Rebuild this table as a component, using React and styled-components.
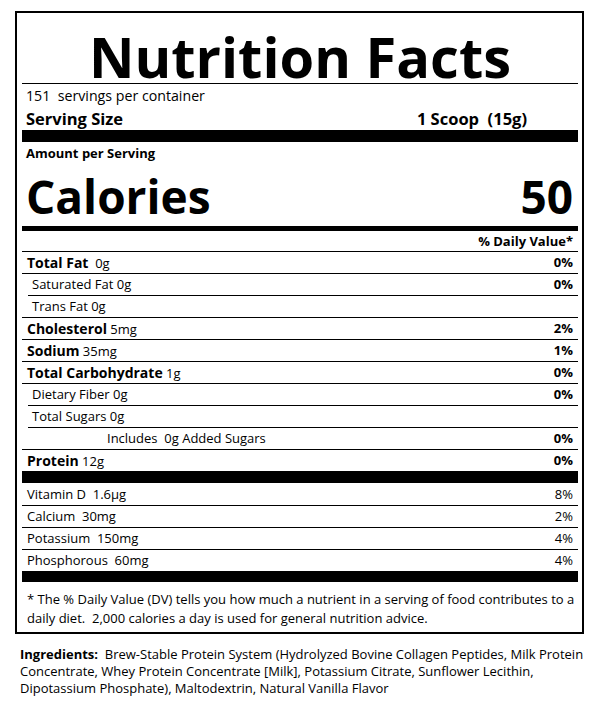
import React from "react";
import styled, { createGlobalStyle } from "styled-components";

const Global = createGlobalStyle`
  html, body { margin: 0; padding: 0; background: #fff; }
  body {
    font-family: "Open Sans", "Liberation Sans", Arial, sans-serif;
    color: #000;
  }
`;

const Page = styled.div`
  padding: 11px 0 0 15px;
  width: 569px;
`;

const Label = styled.section`
  box-sizing: border-box;
  width: 569px;
  border: 2px solid #000;
  padding: 0 4px 0 5px;
  display: flex;
  flex-direction: column;
`;

const Title = styled.h1`
  margin: 0;
  padding-top: 16px;
  font-size: 56px;
  line-height: 54px;
  font-weight: 700;
  text-align: center;
  border-bottom: 1px solid #000;
`;

const Servings = styled.div`
  font-size: 14.2px;
  line-height: 23px;
  padding-left: 4px;
  white-space: pre;
`;

const ServingSize = styled.div`
  display: flex;
  justify-content: space-between;
  font-size: 16.5px;
  font-weight: 700;
  line-height: 23px;
  padding: 0 51px 0 4px;
  white-space: pre;
`;

const Bar = styled.div`
  height: ${(p) => p.$h}px;
  background: #000;
`;

const Amount = styled.div`
  font-size: 13px;
  font-weight: 700;
  line-height: 22px;
  padding-left: 4px;
`;

const CaloriesRow = styled.div`
  display: flex;
  justify-content: space-between;
  font-size: 46px;
  font-weight: 700;
  line-height: 60px;
  padding: 2px 5px 0 4px;
`;

const DVHeader = styled.div`
  font-size: 13px;
  font-weight: 700;
  line-height: 20px;
  text-align: right;
  padding-right: 5px;
`;

const Row = styled.div`
  box-sizing: border-box;
  height: 22px;
  display: flex;
  justify-content: space-between;
  align-items: center;
  border-top: 1px solid #000;
  margin-left: ${(p) => p.$rule || 0}px;
  padding: 0 5px 0 ${(p) => p.$pad}px;
  font-size: 13px;
  line-height: 21px;
  white-space: pre;
`;

const Name = styled.span`
  font-size: ${(p) => (p.$bold ? 14 : 13)}px;
  font-weight: ${(p) => (p.$bold ? 700 : 400)};
`;

const Pct = styled.span`
  font-size: 13px;
  font-weight: 700;
`;

const VitRow = styled.div`
  box-sizing: border-box;
  height: 22px;
  display: flex;
  justify-content: space-between;
  align-items: center;
  border-top: 1px solid #000;
  padding: 0 5px;
  font-size: 13px;
  line-height: 21px;
  white-space: pre;
  &:first-child {
    border-top: none;
  }
`;

const Footnote = styled.p`
  margin: 0;
  padding: 8px 2px 4px 5px;
  font-size: 13px;
  line-height: 19px;
  white-space: pre-wrap;
`;

const Ingredients = styled.p`
  margin: 12px 0 0 5px;
  width: 575px;
  font-size: 13px;
  line-height: 17px;
  white-space: pre-wrap;
  b { font-weight: 700; }
`;

const nutrients = [
  { name: "Total Fat", amt: "  0g", pct: "0%", bold: true, pad: 5 },
  { name: "Saturated Fat", amt: " 0g", pct: "0%", pad: 10 },
  { name: "Trans Fat", amt: " 0g", pct: "", rule: 6, pad: 4 },
  { name: "Cholesterol", amt: " 5mg", pct: "2%", bold: true, pad: 5 },
  { name: "Sodium", amt: " 35mg", pct: "1%", bold: true, pad: 5 },
  { name: "Total Carbohydrate", amt: " 1g", pct: "0%", bold: true, pad: 5 },
  { name: "Dietary Fiber", amt: " 0g", pct: "0%", pad: 10 },
  { name: "Total Sugars", amt: " 0g", pct: "", rule: 6, pad: 4 },
  { name: "Includes  0g Added Sugars", amt: "", pct: "0%", rule: 6, pad: 79 },
  { name: "Protein", amt: " 12g", pct: "0%", bold: true, pad: 5 },
];

const vitamins = [
  ["Vitamin D  1.6µg", "8%"],
  ["Calcium  30mg", "2%"],
  ["Potassium  150mg", "4%"],
  ["Phosphorous  60mg", "4%"],
];

export default function App() {
  return (
    <>
      <Global />
      <Page>
        <Label>
          <Title>Nutrition Facts</Title>
          <Servings>151  servings per container</Servings>
          <ServingSize>
            <span>Serving Size</span>
            <span>1 Scoop  (15g)</span>
          </ServingSize>
          <Bar $h={12} />
          <Amount>Amount per Serving</Amount>
          <CaloriesRow>
            <span>Calories</span>
            <span>50</span>
          </CaloriesRow>
          <Bar $h={5} />
          <DVHeader>% Daily Value*</DVHeader>
          {nutrients.map((n) => (
            <Row key={n.name} $rule={n.rule} $pad={n.pad}>
              <span>
                <Name $bold={n.bold}>{n.name}</Name>
                {n.amt}
              </span>
              <Pct>{n.pct}</Pct>
            </Row>
          ))}
          <Bar $h={12} />
          <div>
            {vitamins.map(([a, b]) => (
              <VitRow key={a}>
                <span>{a}</span>
                <span>{b}</span>
              </VitRow>
            ))}
          </div>
          <Bar $h={11} />
          <Footnote>
            {"* The % Daily Value (DV) tells you how much a nutrient in a serving of food contributes to a daily diet.  2,000 calories a day is used for general nutrition advice."}
          </Footnote>
        </Label>
        <Ingredients>
          <b>Ingredients:</b>
          {"  Brew-Stable Protein System (Hydrolyzed Bovine Collagen Peptides, Milk Protein Concentrate, Whey Protein Concentrate [Milk], Potassium Citrate, Sunflower Lecithin,"}
          <br />
          {"Dipotassium Phosphate), Maltodextrin, Natural Vanilla Flavor"}
        </Ingredients>
      </Page>
    </>
  );
}
